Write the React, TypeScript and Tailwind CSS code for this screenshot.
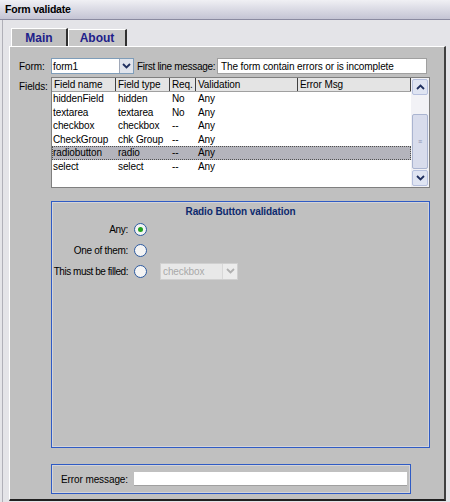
import React from 'react';

const rows = [
  { name: 'hiddenField', type: 'hidden', req: 'No', v: 'Any' },
  { name: 'textarea', type: 'textarea', req: 'No', v: 'Any' },
  { name: 'checkbox', type: 'checkbox', req: '--', v: 'Any' },
  { name: 'CheckGroup', type: 'chk Group', req: '--', v: 'Any' },
  { name: 'radiobutton', type: 'radio', req: '--', v: 'Any', sel: true },
  { name: 'select', type: 'select', req: '--', v: 'Any' },
];

function Chevron({ up = false, color = '#1f2f5f' }: { up?: boolean; color?: string }) {
  return (
    <svg width="9" height="6" viewBox="0 0 9 6">
      <path d={up ? 'M1 5 L4.5 1.5 L8 5' : 'M1 1 L4.5 4.5 L8 1'} fill="none" stroke={color} strokeWidth="1.8" />
    </svg>
  );
}

function Radio({ checked = false }: { checked?: boolean }) {
  return (
    <span className="w-[13px] h-[13px] rounded-full border border-[#2c5aa0] bg-[#f4f4f4] flex items-center justify-center">
      {checked && <span className="w-[5px] h-[5px] rounded-full bg-[#21a121]" />}
    </span>
  );
}

export default function App() {
  return (
    <div className="w-[450px] h-[502px] bg-[#e4e4e8] text-[10px] tracking-[-0.1px] text-black overflow-hidden flex flex-col" style={{ fontFamily: '"Liberation Sans", Arial, sans-serif' }}>
      <div className="h-[20px] shrink-0 bg-gradient-to-b from-[#f0f0f4] to-[#c4c4d4] border-b border-[#8a8aa0] flex items-center pl-[5px] font-bold text-[10.5px] tracking-[-0.2px]">
        Form validate
      </div>
      <div className="flex-1 border-l border-[#b0b0b8] ml-[2px] pl-[6px] pr-[4px] pt-[8px] flex flex-col">
        {/* tabs */}
        <div className="flex items-end h-[18px] pl-[2px]">
          <div className="w-[57px] h-[18px] bg-[#c0c0c0] border-l border-t border-white border-r-2 border-r-[#303030] flex items-center justify-center font-bold text-[12px] tracking-normal text-[#20208a]">
            Main
          </div>
          <div className="w-[59px] h-[17px] bg-[#c8c8c8] border-l border-t border-white border-r-2 border-r-[#303030] flex items-center justify-center font-bold text-[12px] tracking-normal text-[#20208a]">
            About
          </div>
        </div>
        <div className="flex-1 bg-[#c0c0c0] border-l border-t border-white border-r-2 border-r-[#404040] border-b-2 border-b-[#202020] mb-[1px] flex flex-col pr-[14px]">
          {/* form row */}
          <div className="flex items-center h-[16px] mt-[11px] pl-[9px] mr-[3px]">
            <span className="w-[32px]">Form:</span>
            <div className="w-[83px] h-[16px] bg-white border border-[#7f9db9] flex items-center">
              <span className="flex-1 pl-[1px]">form1</span>
              <span className="w-[14px] h-[14px] bg-[#e0e4ec] border-l border-[#a0a8b8] flex items-center justify-center">
                <Chevron />
              </span>
            </div>
            <span className="ml-[3px] w-[79px] whitespace-nowrap tracking-[-0.3px]">First line message:</span>
            <div className="ml-[1px] flex-1 h-[16px] bg-white border border-[#a0a0a0] flex items-center pl-[3px] whitespace-nowrap overflow-hidden">
              The form contain errors or is incomplete
            </div>
          </div>
          {/* fields */}
          <div className="flex mt-[3px] pl-[9px]">
            <span className="w-[32px] pt-[2px]">Fields:</span>
            <div className="flex-1 h-[111px] bg-white border border-[#7f7f7f] flex">
              <div className="flex-1 flex flex-col">
                <div className="flex h-[14px] bg-[#e4e4e4] border-b border-[#a0a0a0] leading-[13px]">
                  <div className="w-[64px] pl-[2px] border-r border-[#404040]">Field name</div>
                  <div className="w-[54px] pl-[2px] border-r border-[#404040]">Field type</div>
                  <div className="w-[26px] pl-[2px] border-r border-[#404040]">Req.</div>
                  <div className="w-[102px] pl-[2px] border-r border-[#404040]">Validation</div>
                  <div className="flex-1 pl-[2px] border-r border-[#404040]">Error Msg</div>
                </div>
                <div className="flex flex-col">
                  {rows.map((r) => (
                    <div
                      key={r.name}
                      className={`flex h-[13.6px] leading-[12px] ${r.sel ? 'bg-[#b4b4bc] border border-dotted border-[#505050]' : 'border border-transparent'}`}
                    >
                      <div className="w-[63px]">{r.name}</div>
                      <div className="w-[54px] pl-[2px]">{r.type}</div>
                      <div className="w-[26px] pl-[2px]">{r.req}</div>
                      <div className="w-[102px] pl-[2px]">{r.v}</div>
                    </div>
                  ))}
                </div>
              </div>
              <div className="w-[18px] bg-[#f2f2f6] flex flex-col items-center py-[1px] gap-[1px]">
                <div className="w-[16px] h-[16px] rounded-[2px] bg-[#dfe4f2] border border-[#b6c0de] flex items-center justify-center">
                  <Chevron up />
                </div>
                <div className="flex-1 w-full flex flex-col pt-[18px]">
                  <div className="flex-1 mx-[1px] rounded-[2px] bg-[#d8dcec] border border-[#aab4d0] flex items-center justify-center text-[7px] text-[#8890b0] leading-none">≡</div>
                </div>
                <div className="w-[16px] h-[16px] rounded-[2px] bg-[#dfe4f2] border border-[#b6c0de] flex items-center justify-center">
                  <Chevron />
                </div>
              </div>
            </div>
          </div>
          {/* radio box */}
          <div className="ml-[41px] mt-[13px] h-[247px] border border-[#2f5bc4] flex flex-col">
            <div className="flex-1 border border-[#d4d4d8] flex flex-col">
              <div className="text-center font-bold text-[#0d2a6e] pt-[3px] leading-[12px]">Radio Button validation</div>
              <div className="flex flex-col mt-[4px] gap-[7px]">
                <div className="flex items-center h-[14px]">
                  <div className="w-[75px] flex justify-end whitespace-nowrap tracking-[-0.3px]">Any:</div>
                  <span className="ml-[6px]"><Radio checked /></span>
                </div>
                <div className="flex items-center h-[14px]">
                  <div className="w-[75px] flex justify-end whitespace-nowrap tracking-[-0.3px]">One of them:</div>
                  <span className="ml-[6px]"><Radio /></span>
                </div>
                <div className="flex items-center h-[14px]">
                  <div className="w-[75px] flex justify-end whitespace-nowrap tracking-[-0.45px]">This must be filled:</div>
                  <span className="ml-[6px]"><Radio /></span>
                  <div className="ml-[13px] w-[78px] h-[17px] bg-[#e8e8e8] border border-[#d0d0d0] flex items-center text-[#a8a8a8]">
                    <span className="flex-1 pl-[2px]">checkbox</span>
                    <span className="w-[15px] h-[15px] border-l border-[#d8d8d8] bg-[#ececec] flex items-center justify-center">
                      <Chevron color="#b0b0b0" />
                    </span>
                  </div>
                </div>
              </div>
            </div>
          </div>
          <div className="flex-1" />
          {/* error message */}
          <div className="ml-[41px] mr-[19px] mb-[5px] h-[30px] border border-[#2f5bc4] flex">
            <div className="flex-1 border border-[#d4d4d8] flex items-center">
              <span className="w-[75px] text-right">Error message:</span>
              <div className="ml-[6px] w-[273px] h-[14px] bg-white border-b border-[#a0a0a0]" />
            </div>
          </div>
        </div>
      </div>
    </div>
  );
}
